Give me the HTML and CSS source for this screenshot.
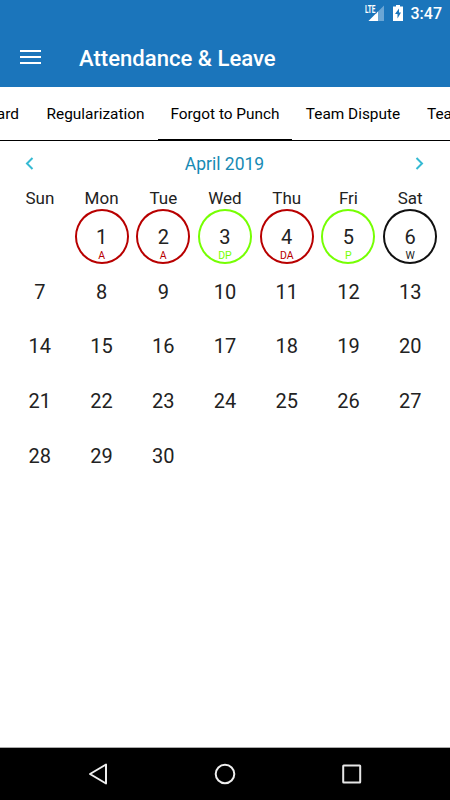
FILE: index.html
```html
<!DOCTYPE html>
<html lang="en">
<head>
  <meta charset="UTF-8">
  <meta name="viewport" content="width=device-width, initial-scale=1.0">
  <title>Attendance &amp; Leave</title>
  <link rel="stylesheet" href="styles.css">
</head>
<body>
  <div class="status-bar">
    <svg class="signal" width="20" height="18" viewBox="0 0 20 18">
      <path d="M19 0.5V16H3.5Z" fill="#6ba6d5"/>
      <path d="M13 6.5V16H3.5Z" fill="#fff"/>
      <rect x="0" y="0" width="11.5" height="8.5" fill="#1b75bb"/>
      <text x="0" y="7.5" class="lte" textLength="10.5" lengthAdjust="spacingAndGlyphs">LTE</text>
    </svg>
    <svg class="battery" width="10" height="16" viewBox="0 0 10 16">
      <path d="M3 0H7V1.5H10V16H0V1.5H3Z" fill="#fff"/>
      <path d="M6 3.5L2 9H4.5V13.5L8 7.5H6Z" fill="#1b75bb"/>
    </svg>
    <span class="time">3:47</span>
  </div>

  <div class="header">
    <button class="menu" aria-label="Menu">
      <span></span>
      <span></span>
      <span></span>
    </button>
    <h1>Attendance &amp; Leave</h1>
  </div>

  <div class="tabs">
    <div class="tab tab-first">Card</div>
    <div class="tab tab-regular">Regularization</div>
    <div class="tab tab-forgot active">Forgot to Punch</div>
    <div class="tab tab-team">Team Dispute</div>
    <div class="tab tab-last">Team</div>
  </div>

  <div class="calendar">
    <div class="month">
      <svg width="10" height="14" viewBox="0 0 10 14">
        <path d="M8.5 1L3 6.5L8.5 12" fill="none" stroke="#35bad3" stroke-width="2"/>
      </svg>
      <span>April 2019</span>
      <svg width="10" height="14" viewBox="0 0 10 14">
        <path d="M1.5 1L7 6.5L1.5 12" fill="none" stroke="#35bad3" stroke-width="2"/>
      </svg>
    </div>
    <div class="weekdays">
      <span>Sun</span>
      <span>Mon</span>
      <span>Tue</span>
      <span>Wed</span>
      <span>Thu</span>
      <span>Fri</span>
      <span>Sat</span>
    </div>
    <div class="days" id="days"></div>
  </div>

  <div class="nav-bar">
    <svg width="22" height="24" viewBox="0 0 22 24">
      <path d="M19 2.5V21.5L3 12Z" fill="none" stroke="#eee" stroke-width="2" stroke-linejoin="round"/>
    </svg>
    <svg width="22" height="24" viewBox="0 0 22 24">
      <circle cx="11" cy="12" r="9.3" fill="none" stroke="#eee" stroke-width="2"/>
    </svg>
    <svg width="22" height="24" viewBox="0 0 22 24">
      <rect x="2.2" y="3.5" width="17" height="17" rx="0.5" fill="none" stroke="#e6e6e6" stroke-width="2"/>
    </svg>
  </div>

  <script>
    const statuses = {
      1: ["A", "absent"],
      2: ["A", "absent"],
      3: ["DP", "present"],
      4: ["DA", "absent"],
      5: ["P", "present"],
      6: ["W", "weekoff"]
    };
    const days = document.getElementById("days");

    // April 2019 starts on a Monday
    days.innerHTML = "<div></div>";

    for (let day = 1; day <= 30; day++) {
      const dayElement = document.createElement("div");
      dayElement.classList.add("day");
      dayElement.innerHTML = `<span class="number">${day}</span>`;
      if (statuses[day]) {
        dayElement.classList.add(statuses[day][1]);
        dayElement.innerHTML += `<span class="code">${statuses[day][0]}</span>`;
      }
      days.appendChild(dayElement);
    }
  </script>
</body>
</html>
```
FILE: styles.css
```css
* {
  box-sizing: border-box;
}

body {
  display: flex;
  flex-direction: column;
  height: 800px;
  margin: 0;
  overflow: hidden;
  font-family: Roboto, sans-serif;
  background-color: #fff;
}

.status-bar {
  display: flex;
  height: 28px;
  padding: 5px 8px 0 0;
  justify-content: flex-end;
  color: #fff;
  background-color: #1b75bb;
}

.lte {
  font-size: 10px;
  font-weight: 700;
  fill: #fff;
}

.battery {
  margin-left: 8px;
}

.time {
  margin-left: 8px;
  font-size: 16px;
  font-weight: 500;
  line-height: 18px;
}

.header {
  display: flex;
  height: 59px;
  padding-left: 20px;
  align-items: center;
  color: #fff;
  background-color: #1b75bb;
}

.menu {
  display: flex;
  flex-direction: column;
  width: 21px;
  margin-bottom: 2px;
  padding: 0;
  gap: 4px;
  border: none;
  background: none;
}

.menu span {
  height: 2px;
  background-color: #fff;
}

.header h1 {
  margin: 0 0 0 38px;
  font-size: 22.1px;
  font-weight: 500;
}

.tabs {
  display: flex;
  height: 54px;
  overflow: hidden;
  border-bottom: 1px solid #000;
  font-size: 15.4px;
  line-height: 54px;
  text-align: center;
  white-space: nowrap;
}

.tab {
  flex: none;
}

.tab-first {
  width: 60px;
  margin-left: -27px;
  padding-right: 14px;
  text-align: right;
}

.tab-regular {
  width: 125px;
}

.tab-forgot {
  width: 134px;
}

.tab-team {
  width: 122px;
}

.tab-last {
  padding-left: 13px;
}

.tab.active {
  border-bottom: 1px solid #000;
}

.calendar {
  flex: 1;
  padding: 0 9px;
  color: #222;
}

.month {
  display: flex;
  height: 45px;
  padding: 0 16px 0 15px;
  align-items: center;
  justify-content: space-between;
  color: #178ab4;
  font-size: 17.5px;
}

.weekdays {
  display: grid;
  grid-template-columns: repeat(7, 1fr);
  height: 23px;
  font-size: 17px;
  line-height: 24px;
  text-align: center;
}

.days {
  display: grid;
  grid-template-columns: repeat(7, 1fr);
  grid-auto-rows: 54.7px;
  justify-items: center;
}

.day {
  position: relative;
  width: 54px;
  border: 2px solid transparent;
  border-radius: 50%;
  text-align: center;
}

.number {
  display: block;
  font-size: 20px;
  line-height: 52px;
}

.code {
  position: absolute;
  right: 0;
  bottom: 0;
  left: 0;
  font-size: 10.5px;
  line-height: 12px;
}

.absent {
  border-color: #b80000;
}

.absent .code {
  color: #b80000;
}

.present {
  border-color: #76ff03;
}

.present .code {
  color: #76ff03;
}

.weekoff {
  border-color: #111;
}

.nav-bar {
  display: flex;
  height: 53px;
  padding: 0 87px;
  align-items: center;
  justify-content: space-between;
  border-top: 1px solid #aaa;
  background-color: #000;
}
```
